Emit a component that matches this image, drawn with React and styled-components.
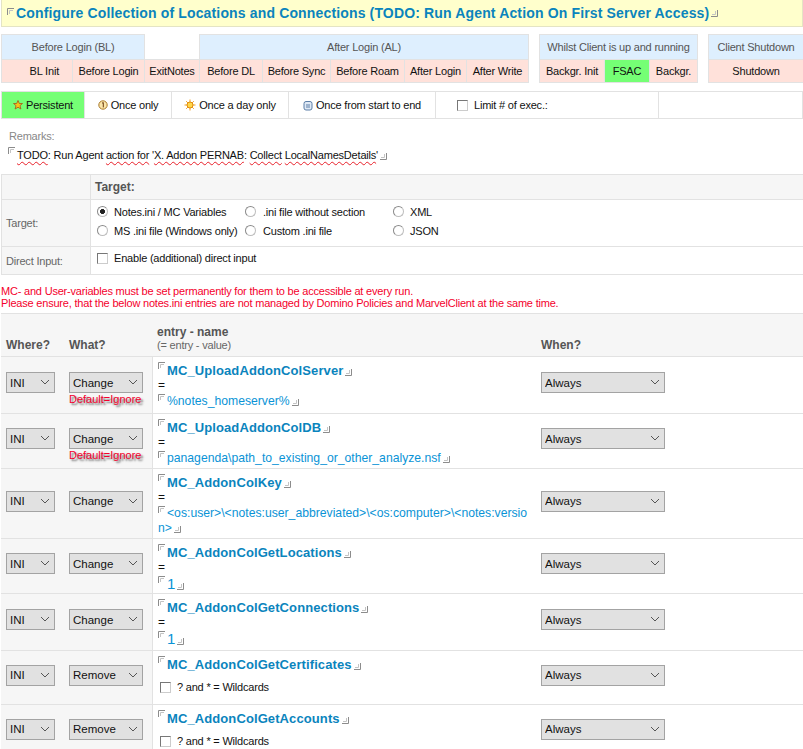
import React from 'react';
import styled, { createGlobalStyle } from 'styled-components';

const Global = createGlobalStyle`
  html, body {
    margin: 0;
    height: 749px;
    overflow: hidden;
    background: white;
    font-family: "Liberation Sans", Arial, sans-serif;
    font-size: 11px;
    letter-spacing: -0.2px;
    color: #111;
  }
`;

const Page = styled.div`
  width: 803px;
  height: 749px;
  overflow: hidden;
`;

const Title = styled.h1`
  margin: 0 0 8px 1px;
  height: 27px;
  box-sizing: border-box;
  padding-left: 5px;
  display: flex;
  align-items: center;
  background: #ffffcc;
  border: 1px solid #e4e4c4;
  border-top: 0;
  color: #0a84bd;
  font-size: 14px;
  letter-spacing: 0.15px;
  font-weight: bold;
  white-space: nowrap;
`;

const Events = styled.div`
  display: grid;
  grid-template-columns: 70px 71px 54px 62px 67px 73px 61px 61px 10px 64px 44px 47px 10px 94px;
  grid-template-rows: 24px 22px;
  gap: 1px;
  margin: 0 0 10px 2px;
`;

const EventCell = styled.div`
  display: flex;
  align-items: center;
  justify-content: ${(p) => (p.$end ? 'flex-end' : 'center')};
  padding-right: ${(p) => (p.$end ? '13px' : 0)};
  grid-column: span ${(p) => p.$span || 1};
  white-space: nowrap;
  background: ${(p) => (p.$on ? '#75ff75' : p.$head ? '#deeffe' : '#ffe1da')};
  color: ${(p) => (p.$head ? '#555' : '#111')};
  box-shadow: 0 0 0 1px #e2e2e2;
`;

const Spacer = styled.div`
  grid-column: span ${(p) => p.$span || 1};
`;

const Modes = styled.div`
  display: flex;
  gap: 1px;
  height: 26px;
  margin: 0 1px 0 2px;
  box-shadow: 0 0 0 1px #e2e2e2;
  background: #e2e2e2;
`;

const Mode = styled.div`
  display: flex;
  align-items: center;
  justify-content: ${(p) => (p.$left ? 'flex-start' : 'center')};
  gap: 3px;
  width: ${(p) => p.$w}px;
  flex: ${(p) => (p.$grow ? 1 : 'none')};
  padding-left: ${(p) => (p.$left ? '21px' : 0)};
  box-sizing: border-box;
  background: ${(p) => (p.$on ? '#75ff75' : 'white')};
`;

const Remarks = styled.div`
  padding: 11px 0 0 8px;
  height: 56px;
  box-sizing: border-box;
`;

const RemarksLabel = styled.div`
  color: #888;
  line-height: 14px;
  margin: 0 0 4px 1px;
`;

const RemarksText = styled.div`
  line-height: 16px;
  white-space: nowrap;
`;

const Wavy = styled.span`
  text-decoration: underline wavy #e8202a 1px;
  text-underline-offset: 2px;
`;

const TargetBox = styled.div`
  display: grid;
  grid-template-columns: 88px 1fr;
  grid-template-rows: 24px 46px 27px;
  gap: 1px;
  margin-left: 1px;
  background: #e2e2e2;
  border-top: 1px solid #e2e2e2;
  border-left: 1px solid #e2e2e2;
  border-bottom: 1px solid #e2e2e2;
`;

const TargetCell = styled.div`
  display: flex;
  align-items: center;
  padding-left: ${(p) => (p.$pad ? p.$pad : 4)}px;
  background: ${(p) => (p.$white ? 'white' : '#f6f6f6')};
  color: ${(p) => (p.$dark ? '#111' : '#666')};
`;

const Strong = styled.b`
  color: #555;
  font-size: 12px;
  letter-spacing: 0;
  font-weight: bold;
`;

const RadioGrid = styled.div`
  display: grid;
  grid-template-columns: 148px 148px 120px;
  grid-auto-rows: 19px;
  align-items: center;
  margin-bottom: 4px;
`;

const Choice = styled.label`
  display: flex;
  align-items: center;
  gap: ${(p) => p.$gap || 6}px;
  margin-bottom: ${(p) => p.$lift || 0}px;
  white-space: nowrap;
`;

const Radio = styled.input.attrs({ type: 'radio' })`
  appearance: none;
  margin: 0;
  width: 11px;
  height: 11px;
  flex: none;
  border-radius: 50%;
  border: 1px solid #bdbdbd;
  border-top-color: #8a8a8a;
  border-left-color: #8a8a8a;
  box-sizing: border-box;
  background: white;
  &:checked {
    background: radial-gradient(circle, #222 0 2.2px, white 2.8px);
  }
`;

const Check = styled.input.attrs({ type: 'checkbox' })`
  appearance: none;
  margin: 0;
  width: 11px;
  height: 11px;
  flex: none;
  box-sizing: border-box;
  border: 1px solid #777;
  border-right-color: #ccc;
  border-bottom-color: #ccc;
  background: white;
`;

const Warning = styled.div`
  margin: 10px 0 4px 1px;
  color: #f4002c;
  line-height: 12px;
  white-space: nowrap;
`;

const Row = styled.div`
  display: grid;
  grid-template-columns: 62px 89px 1fr 266px;
  height: ${(p) => p.$h}px;
  margin-left: 1px;
  border-top: 1px solid #e2e2e2;
  box-sizing: content-box;
`;

const SideCell = styled.div`
  display: flex;
  align-items: center;
  padding: 0 0 5px ${(p) => p.$pad || 5}px;
  background: #f6f6f6;
`;

const HeadCell = styled.div`
  display: flex;
  flex-direction: column;
  justify-content: flex-end;
  padding: 0 0 4px ${(p) => p.$pad || 5}px;
  background: #f6f6f6;
  line-height: 13px;
`;

const Sub = styled.span`
  color: #666;
`;

const EntryCell = styled.div`
  padding: 5px 7px 0 5px;
  border-left: 1px solid #e2e2e2;
  background: white;
`;

const WhenCell = styled.div`
  display: flex;
  align-items: center;
  padding: 0 0 5px 4px;
  background: white;
`;

const EntryName = styled.div`
  color: #0a84bd;
  font-size: 13px;
  letter-spacing: 0.1px;
  font-weight: bold;
  line-height: 17px;
`;

const Equals = styled.div`
  line-height: 13px;
  height: 13px;
  font-size: 12px;
`;

const EntryValue = styled.div`
  margin-top: 2px;
  color: #0a93d6;
  font-size: ${(p) => (p.$big ? 15 : 12.2)}px;
  letter-spacing: 0;
  line-height: 15px;
  word-break: break-all;
`;

const WildRow = styled(Choice)`
  margin: 8px 0 0 2px;
`;

const SelectBox = styled.div`
  position: relative;
  width: ${(p) => p.$w}px;
  height: 21px;
  flex: none;
`;

const NativeSelect = styled.select`
  appearance: none;
  display: block;
  width: 100%;
  height: 100%;
  margin: 0;
  padding: 0 0 0 3px;
  border: 1px solid #a3a3a3;
  border-radius: 0;
  background: #e1e1e1;
  color: #111;
  font: 11.5px "Liberation Sans", Arial, sans-serif;
`;

const Arrow = styled.svg`
  position: absolute;
  top: 7px;
  right: 5px;
  pointer-events: none;
`;

const DefaultNote = styled.div`
  position: absolute;
  top: 100%;
  left: 0;
  line-height: 13px;
  letter-spacing: 0;
  color: #f4002c;
  white-space: nowrap;
  text-shadow: 2px 2px 2px #666;
`;

const MarkIcon = styled.svg`
  display: inline-block;
  margin: ${(p) => (p.$end ? '0 0 -1px 2px' : '0 2px 4px 0')};
  vertical-align: ${(p) => (p.$end ? 'baseline' : 'top')};
`;

function OpenMark() {
  return (
    <MarkIcon width="7" height="7" viewBox="0 0 7 7" fill="none">
      <path d="M.5 7V.5H7" stroke="#8c8c8c" />
      <path d="M2.5 6V2.5H6" stroke="#c4c4c4" />
    </MarkIcon>
  );
}

function CloseMark() {
  return (
    <MarkIcon $end width="7" height="7" viewBox="0 0 7 7" fill="none">
      <path d="M6.5 0V6.5H0" stroke="#8c8c8c" />
      <path d="M4.5 1V4.5H1" stroke="#c4c4c4" />
    </MarkIcon>
  );
}

function Select({ value, width, note }) {
  return (
    <SelectBox $w={width}>
      <NativeSelect defaultValue={value}>
        <option>{value}</option>
      </NativeSelect>
      <Arrow width="10" height="6" viewBox="0 0 10 6" fill="none">
        <path d="M1 1l4 4 4-4" stroke="#555" />
      </Arrow>
      {note && <DefaultNote>Default=Ignore</DefaultNote>}
    </SelectBox>
  );
}

function StarIcon() {
  return (
    <svg width="10" height="10" viewBox="0 0 10 10">
      <path d="M5 .5l1.3 3h3.2L7 5.6l.9 3.4L5 7.2 2.1 9 3 5.6.5 3.5h3.2z" fill="#f5c518" stroke="#a5541a" strokeWidth=".8" />
    </svg>
  );
}

function OnceIcon() {
  return (
    <svg width="10" height="10" viewBox="0 0 10 10">
      <circle cx="5" cy="5" r="4.2" fill="#fbe6a8" stroke="#a87a2c" />
      <path d="M4 3.2L5.3 2.6V7.4" fill="none" stroke="#6b3a10" />
    </svg>
  );
}

function SunIcon() {
  return (
    <svg width="12" height="12" viewBox="0 0 12 12">
      <path d="M6 .5v11M.5 6h11M2.2 2.2l7.6 7.6M9.8 2.2l-7.6 7.6" stroke="#f0a020" />
      <circle cx="6" cy="6" r="3" fill="#ffd84a" stroke="#e08a10" />
    </svg>
  );
}

function ClockIcon() {
  return (
    <svg width="10" height="11" viewBox="0 0 10 11">
      <rect x="1" y="1.5" width="8" height="8.5" rx="2" fill="#dfe9f5" stroke="#5c7fa8" />
      <path d="M3 5h4M3 7h4" stroke="#5c7fa8" />
    </svg>
  );
}

const entries = [
  { name: 'MC_UploadAddonColServer', value: '%notes_homeserver%', what: 'Change', note: true, h: 56 },
  { name: 'MC_UploadAddonColDB', value: 'panagenda\\path_to_existing_or_other_analyze.nsf', what: 'Change', note: true, h: 54 },
  { name: 'MC_AddonColKey', value: '<os:user>\\<notes:user_abbreviated>\\<os:computer>\\<notes:version>', what: 'Change', h: 69 },
  { name: 'MC_AddonColGetLocations', value: '1', what: 'Change', big: true, h: 54 },
  { name: 'MC_AddonColGetConnections', value: '1', what: 'Change', big: true, h: 56 },
  { name: 'MC_AddonColGetCertificates', what: 'Remove', h: 53 },
  { name: 'MC_AddonColGetAccounts', what: 'Remove', h: 53 },
];

function EntryRow({ entry }) {
  return (
    <Row $h={entry.h}>
      <SideCell>
        <Select value="INI" width={49} />
      </SideCell>
      <SideCell $pad={6}>
        <Select value={entry.what} width={74} note={entry.note} />
      </SideCell>
      <EntryCell>
        <EntryName>
          <OpenMark />
          {entry.name}
          <CloseMark />
        </EntryName>
        {entry.value ? (
          <>
            <Equals>=</Equals>
            <EntryValue $big={entry.big}>
              <OpenMark />
              {entry.value}
              <CloseMark />
            </EntryValue>
          </>
        ) : (
          <WildRow>
            <Check />
            ? and * = Wildcards
          </WildRow>
        )}
      </EntryCell>
      <WhenCell>
        <Select value="Always" width={124} />
      </WhenCell>
    </Row>
  );
}

export default function App() {
  return (
    <Page>
      <Global />
      <Title>
        <OpenMark />
        Configure Collection of Locations and Connections (TODO: Run Agent Action On First Server Access)
        <CloseMark />
      </Title>

      <Events>
        <EventCell $head $span={2}>Before Login (BL)</EventCell>
        <Spacer />
        <EventCell $head $span={5}>After Login (AL)</EventCell>
        <Spacer />
        <EventCell $head $span={3}>Whilst Client is up and running</EventCell>
        <Spacer />
        <EventCell $head>Client Shutdown</EventCell>

        <EventCell $end>BL Init</EventCell>
        <EventCell>Before Login</EventCell>
        <EventCell>ExitNotes</EventCell>
        <EventCell>Before DL</EventCell>
        <EventCell>Before Sync</EventCell>
        <EventCell>Before Roam</EventCell>
        <EventCell>After Login</EventCell>
        <EventCell>After Write</EventCell>
        <Spacer />
        <EventCell>Backgr. Init</EventCell>
        <EventCell $on>FSAC</EventCell>
        <EventCell>Backgr.</EventCell>
        <Spacer />
        <EventCell>Shutdown</EventCell>
      </Events>

      <Modes>
        <Mode $w={82} $on><StarIcon />Persistent</Mode>
        <Mode $w={86}><OnceIcon />Once only</Mode>
        <Mode $w={116}><SunIcon />Once a day only</Mode>
        <Mode $w={146}><ClockIcon />Once from start to end</Mode>
        <Mode $w={222} $left>
          <Choice>
            <Check />
            Limit # of exec.:
          </Choice>
        </Mode>
        <Mode $grow />
      </Modes>

      <Remarks>
        <RemarksLabel>Remarks:</RemarksLabel>
        <RemarksText>
          <OpenMark />
          <Wavy>TODO</Wavy>: Run Agent <Wavy>action for</Wavy> '<Wavy>X. Addon PERNAB</Wavy>: <Wavy>Collect</Wavy> <Wavy>LocalNamesDetails</Wavy>'
          <CloseMark />
        </RemarksText>
      </Remarks>

      <TargetBox>
        <TargetCell />
        <TargetCell $pad={4}><Strong>Target:</Strong></TargetCell>
        <TargetCell>Target:</TargetCell>
        <TargetCell $white $dark $pad={6}>
          <RadioGrid>
            <Choice><Radio name="target" defaultChecked />Notes.ini / MC Variables</Choice>
            <Choice $gap={7}><Radio name="target" />.ini file without section</Choice>
            <Choice><Radio name="target" />XML</Choice>
            <Choice><Radio name="target" />MS .ini file (Windows only)</Choice>
            <Choice $gap={7}><Radio name="target" />Custom .ini file</Choice>
            <Choice><Radio name="target" />JSON</Choice>
          </RadioGrid>
        </TargetCell>
        <TargetCell>Direct Input:</TargetCell>
        <TargetCell $white $dark $pad={6}>
          <Choice $lift={5}><Check />Enable (additional) direct input</Choice>
        </TargetCell>
      </TargetBox>

      <Warning>
        MC- and User-variables must be set permanently for them to be accessible at every run.
        <br />
        Please ensure, that the below notes.ini entries are not managed by Domino Policies and MarvelClient at the same time.
      </Warning>

      <Row $h={42}>
        <HeadCell><Strong>Where?</Strong></HeadCell>
        <HeadCell $pad={6}><Strong>What?</Strong></HeadCell>
        <HeadCell $pad={5}>
          <Strong>entry - name</Strong>
          <Sub>(= entry - value)</Sub>
        </HeadCell>
        <HeadCell $pad={4}><Strong>When?</Strong></HeadCell>
      </Row>
      {entries.map((entry) => (
        <EntryRow key={entry.name} entry={entry} />
      ))}
    </Page>
  );
}
